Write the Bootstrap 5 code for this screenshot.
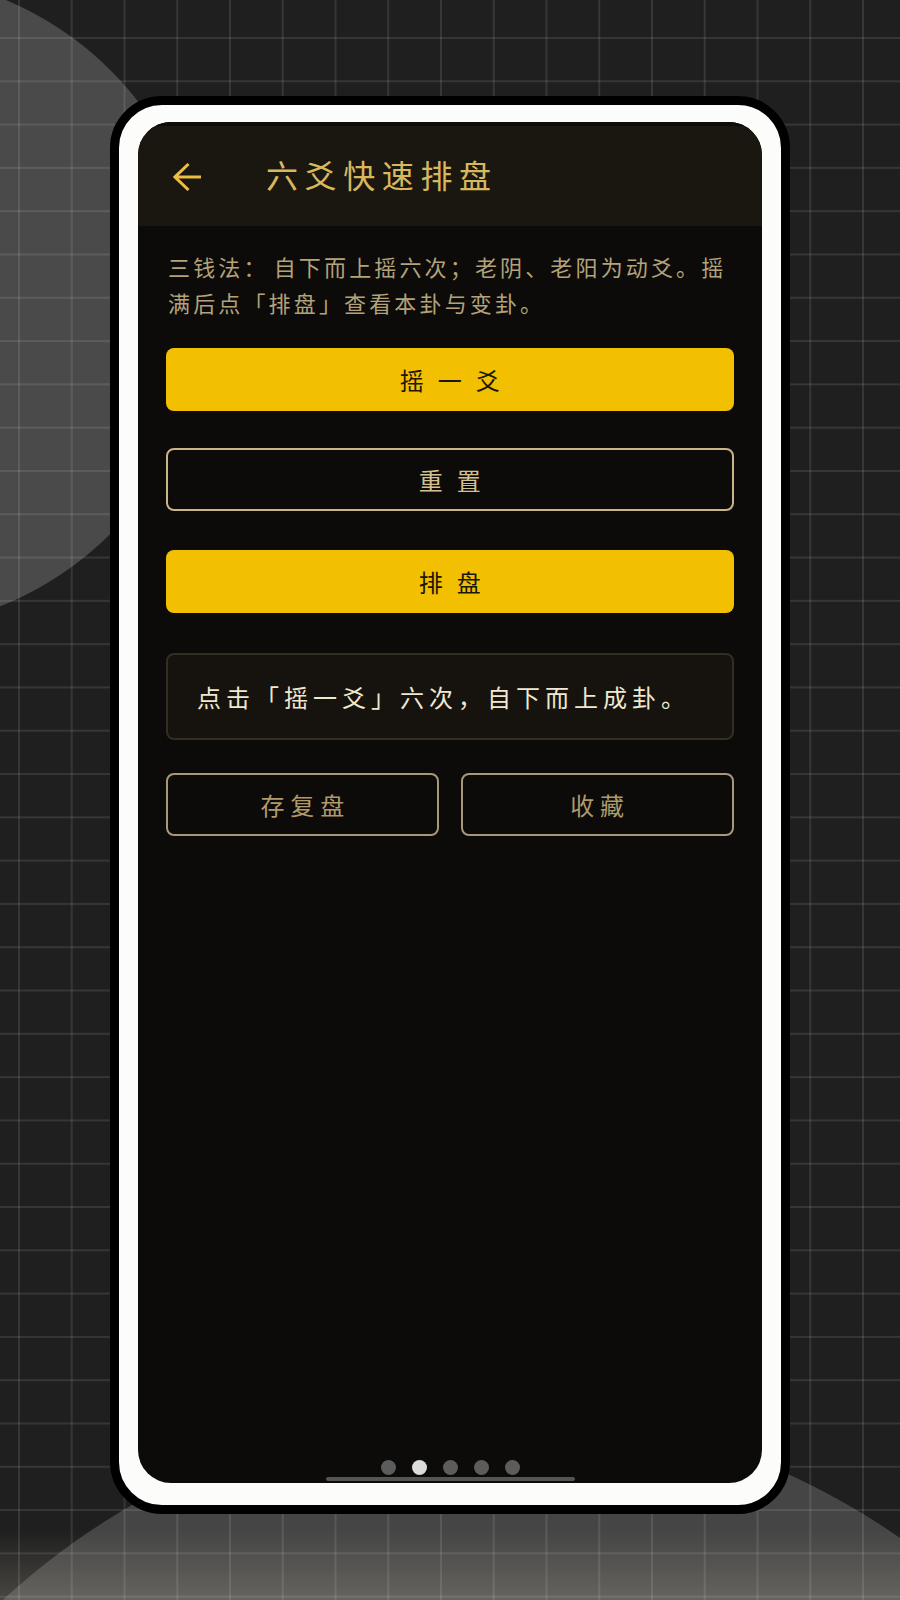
<!DOCTYPE html>
<html lang="zh">
<head>
<meta charset="utf-8">
<title>六爻快速排盘</title>
<link href="https://cdn.jsdelivr.net/npm/bootstrap@5.3.0/dist/css/bootstrap.min.css" rel="stylesheet">
<style>
html,body{height:1600px;overflow:hidden}
body{
  margin:0;padding:96px 0 0 110px;
  font-family:"Noto Sans CJK SC","Liberation Sans",sans-serif;
  background-color:#1f1f1f;
  background-image:
    linear-gradient(to right,rgba(255,255,255,.1) 1.5px,transparent 1.5px),
    linear-gradient(to bottom,rgba(255,255,255,.1) 1.5px,transparent 1.5px),
    linear-gradient(to bottom,transparent 1530px,rgba(200,190,170,.25) 1600px),
    radial-gradient(circle 328px at -121px 302px,#4a4a4a 99.7%,transparent 100%),
    radial-gradient(circle 718px at 490px 2127px,#454545 99.9%,transparent 100%);
  background-size:52.75px 43.3px,52.75px 43.3px,100% 100%,100% 100%,100% 100%;
  background-position:18px 37px,18px 37px,0 0,0 0,0 0;
}
.phone-frame{width:680px;height:1418px;background:#fcfcfa;border:9.5px solid #000;border-radius:52px;padding:17px 19px 22px 19px}
.phone-screen{height:100%;background:#0c0b09;border-radius:33px;overflow:hidden}
.top-strip{height:104px;background:#1a1710;padding-left:35px;border-top:4px solid #0f0d09}
.back-arrow{margin-top:2px}
.top-title{color:#d8b75f;font-size:32px;letter-spacing:6.6px;margin:0 0 4px 65px;line-height:1}
.body-area{padding:22px 28.5px 0 28px}
.intro-text{color:#b3a27a;font-size:22px;letter-spacing:3.15px;word-spacing:-3px;line-height:36px;margin:0 0 28px 2px}
.act-btn{height:63px;border-radius:8px;font-size:24px;line-height:1;padding:0;letter-spacing:14px;text-indent:14px}
.act-fill{background:#f2c000;border:0;color:#1b1708}
.act-line{background:transparent;border:2px solid #c9b588;color:#d6c08e}
.act-fill:hover{background:#f2c000;color:#1b1708}
.act-line:hover{background:transparent;color:#d6c08e}
.gap-37{margin-top:37px}
.gap-39{margin-top:39px}
.gap-40{margin-top:40px}
.result-box{height:87px;background:#16130e;border:2px solid #332d22;border-radius:8px;padding-left:29px;color:#f0e8d0;font-size:24px;letter-spacing:5px}
.sub-row{gap:22px;margin-top:33px}
.sub-btn{width:50%;height:63px;border-radius:8px;background:transparent;border:2px solid #a8977a;color:#b09a6a;font-size:24px;letter-spacing:6px;text-indent:6px;padding:0}
.sub-btn:hover{background:transparent;color:#b09a6a}
.pager-row{gap:16px}
.pager-dot{width:15px;height:15px;border-radius:50%;background:#5c5c5c}
.pager-dot.on{background:#dcdcdc}
.home-bar{width:249px;height:4px;border-radius:2px;background:#555;margin:2px auto 2px}
</style>
</head>
<body>
<div class="phone-frame">
  <div class="phone-screen d-flex flex-column">
    <div class="top-strip d-flex align-items-center">
      <svg class="back-arrow" width="28" height="28" viewBox="0 0 28 28" fill="none" stroke="#ecbc43" stroke-width="3" aria-hidden="true"><path d="M2 14H28M15.5 1L2 14L15.5 27"/></svg>
      <div class="top-title">六爻快速排盘</div>
    </div>
    <div class="body-area d-flex flex-column">
      <p class="intro-text">三钱法： 自下而上摇六次；老阴、老阳为动爻。摇满后点「排盘」查看本卦与变卦。</p>
      <button type="button" class="btn act-btn act-fill w-100">摇一爻</button>
      <button type="button" class="btn act-btn act-line w-100 gap-37">重置</button>
      <button type="button" class="btn act-btn act-fill w-100 gap-39">排盘</button>
      <div class="result-box d-flex align-items-center gap-40">点击「摇一爻」六次，自下而上成卦。</div>
      <div class="d-flex sub-row">
        <button type="button" class="btn sub-btn">存复盘</button>
        <button type="button" class="btn sub-btn">收藏</button>
      </div>
    </div>
    <div class="mt-auto">
      <div class="pager-row d-flex justify-content-center">
        <span class="pager-dot"></span><span class="pager-dot on"></span><span class="pager-dot"></span><span class="pager-dot"></span><span class="pager-dot"></span>
      </div>
      <div class="home-bar"></div>
    </div>
  </div>
</div>
<script src="https://cdn.jsdelivr.net/npm/bootstrap@5.3.0/dist/js/bootstrap.bundle.min.js"></script>
</body>
</html>
